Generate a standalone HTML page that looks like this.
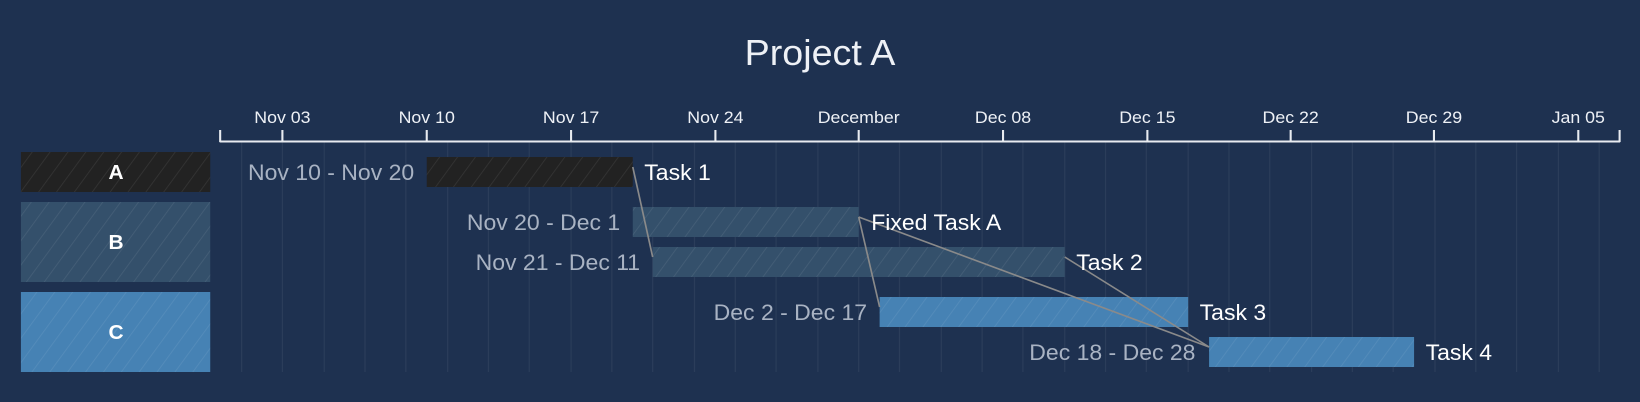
<!DOCTYPE html>
<html><head><meta charset="utf-8"><style>
html,body{margin:0;padding:0;background:#1e3150;}
svg{display:block}
text{font-family:"Liberation Sans","DejaVu Sans",sans-serif;}
</style></head><body>
<svg width="1640" height="402" viewBox="0 0 1568 402" preserveAspectRatio="none" xmlns="http://www.w3.org/2000/svg">
<defs>
<pattern id="h" width="14" height="14" patternUnits="userSpaceOnUse" patternTransform="rotate(35)">
<line x1="0" y1="0" x2="0" y2="14" stroke="rgba(255,255,255,0.09)" stroke-width="1.5"/>
</pattern>
</defs>
<rect width="1568" height="402" fill="#1e3150"/>
<text x="784" y="65" font-size="36" fill="#eef1f6" text-anchor="middle">Project A</text>
<g stroke="rgba(255,255,255,0.06)" stroke-width="1.2">
<line x1="231" y1="142" x2="231" y2="372"/><line x1="270" y1="142" x2="270" y2="372"/><line x1="310" y1="142" x2="310" y2="372"/><line x1="349" y1="142" x2="349" y2="372"/><line x1="388" y1="142" x2="388" y2="372"/><line x1="428" y1="142" x2="428" y2="372"/><line x1="467" y1="142" x2="467" y2="372"/><line x1="506" y1="142" x2="506" y2="372"/><line x1="546" y1="142" x2="546" y2="372"/><line x1="585" y1="142" x2="585" y2="372"/><line x1="624" y1="142" x2="624" y2="372"/><line x1="664" y1="142" x2="664" y2="372"/><line x1="703" y1="142" x2="703" y2="372"/><line x1="742" y1="142" x2="742" y2="372"/><line x1="782" y1="142" x2="782" y2="372"/><line x1="821" y1="142" x2="821" y2="372"/><line x1="860" y1="142" x2="860" y2="372"/><line x1="900" y1="142" x2="900" y2="372"/><line x1="939" y1="142" x2="939" y2="372"/><line x1="978" y1="142" x2="978" y2="372"/><line x1="1018" y1="142" x2="1018" y2="372"/><line x1="1057" y1="142" x2="1057" y2="372"/><line x1="1096" y1="142" x2="1096" y2="372"/><line x1="1136" y1="142" x2="1136" y2="372"/><line x1="1175" y1="142" x2="1175" y2="372"/><line x1="1214" y1="142" x2="1214" y2="372"/><line x1="1254" y1="142" x2="1254" y2="372"/><line x1="1293" y1="142" x2="1293" y2="372"/><line x1="1332" y1="142" x2="1332" y2="372"/><line x1="1372" y1="142" x2="1372" y2="372"/><line x1="1411" y1="142" x2="1411" y2="372"/><line x1="1450" y1="142" x2="1450" y2="372"/><line x1="1490" y1="142" x2="1490" y2="372"/><line x1="1529" y1="142" x2="1529" y2="372"/>
</g>
<g stroke="#e8ebf0" stroke-width="2" fill="none">
<line x1="210" y1="141.5" x2="1549" y2="141.5"/>
<line x1="210.5" y1="130" x2="210.5" y2="142"/><line x1="1548.5" y1="130" x2="1548.5" y2="142"/>
<line x1="270" y1="130" x2="270" y2="142"/><line x1="408" y1="130" x2="408" y2="142"/><line x1="546" y1="130" x2="546" y2="142"/><line x1="684" y1="130" x2="684" y2="142"/><line x1="821" y1="130" x2="821" y2="142"/><line x1="959" y1="130" x2="959" y2="142"/><line x1="1097" y1="130" x2="1097" y2="142"/><line x1="1234" y1="130" x2="1234" y2="142"/><line x1="1371" y1="130" x2="1371" y2="142"/><line x1="1509" y1="130" x2="1509" y2="142"/>
</g>
<g font-size="17" fill="#eef1f6" text-anchor="middle">
<text x="270" y="123">Nov 03</text><text x="408" y="123">Nov 10</text><text x="546" y="123">Nov 17</text><text x="684" y="123">Nov 24</text><text x="821" y="123">December</text><text x="959" y="123">Dec 08</text><text x="1097" y="123">Dec 15</text><text x="1234" y="123">Dec 22</text><text x="1371" y="123">Dec 29</text><text x="1509" y="123">Jan 05</text>
</g>
<rect x="20" y="152" width="181" height="40" fill="#222"/><rect x="20" y="152" width="181" height="40" fill="url(#h)"/>
<rect x="20" y="202" width="181" height="80" fill="#34506b"/><rect x="20" y="202" width="181" height="80" fill="url(#h)"/>
<rect x="20" y="292" width="181" height="80" fill="#4682b4"/><rect x="20" y="292" width="181" height="80" fill="url(#h)"/>
<g font-size="20" font-weight="bold" fill="#fff" text-anchor="middle">
<text x="111" y="179">A</text><text x="111" y="249">B</text><text x="111" y="339">C</text>
</g>
<rect x="408" y="157" width="197" height="30" fill="#222"/><rect x="408" y="157" width="197" height="30" fill="url(#h)"/>
<rect x="605" y="207" width="216" height="30" fill="#34506b"/><rect x="605" y="207" width="216" height="30" fill="url(#h)"/>
<rect x="624" y="247" width="394" height="30" fill="#34506b"/><rect x="624" y="247" width="394" height="30" fill="url(#h)"/>
<rect x="841" y="297" width="295" height="30" fill="#4682b4"/><rect x="841" y="297" width="295" height="30" fill="url(#h)"/>
<rect x="1156" y="337" width="196" height="30" fill="#4682b4"/><rect x="1156" y="337" width="196" height="30" fill="url(#h)"/>
<g stroke="#8a8a8a" stroke-width="1.6" fill="none">
<line x1="605" y1="167" x2="624" y2="257"/>
<line x1="821" y1="217" x2="841" y2="307"/>
<line x1="821" y1="217" x2="1156" y2="347"/>
<line x1="1018" y1="257" x2="1156" y2="347"/>
</g>
<g font-size="22" fill="#a9b3c3" text-anchor="end">
<text x="396" y="180">Nov 10 - Nov 20</text>
<text x="593" y="230">Nov 20 - Dec 1</text>
<text x="612" y="270">Nov 21 - Dec 11</text>
<text x="829" y="320">Dec 2 - Dec 17</text>
<text x="1143" y="360">Dec 18 - Dec 28</text>
</g>
<g font-size="22" fill="#fff">
<text x="616" y="180">Task 1</text>
<text x="833" y="230">Fixed Task A</text>
<text x="1029" y="270">Task 2</text>
<text x="1147" y="320">Task 3</text>
<text x="1363" y="360">Task 4</text>
</g>
</svg>
</body></html>
